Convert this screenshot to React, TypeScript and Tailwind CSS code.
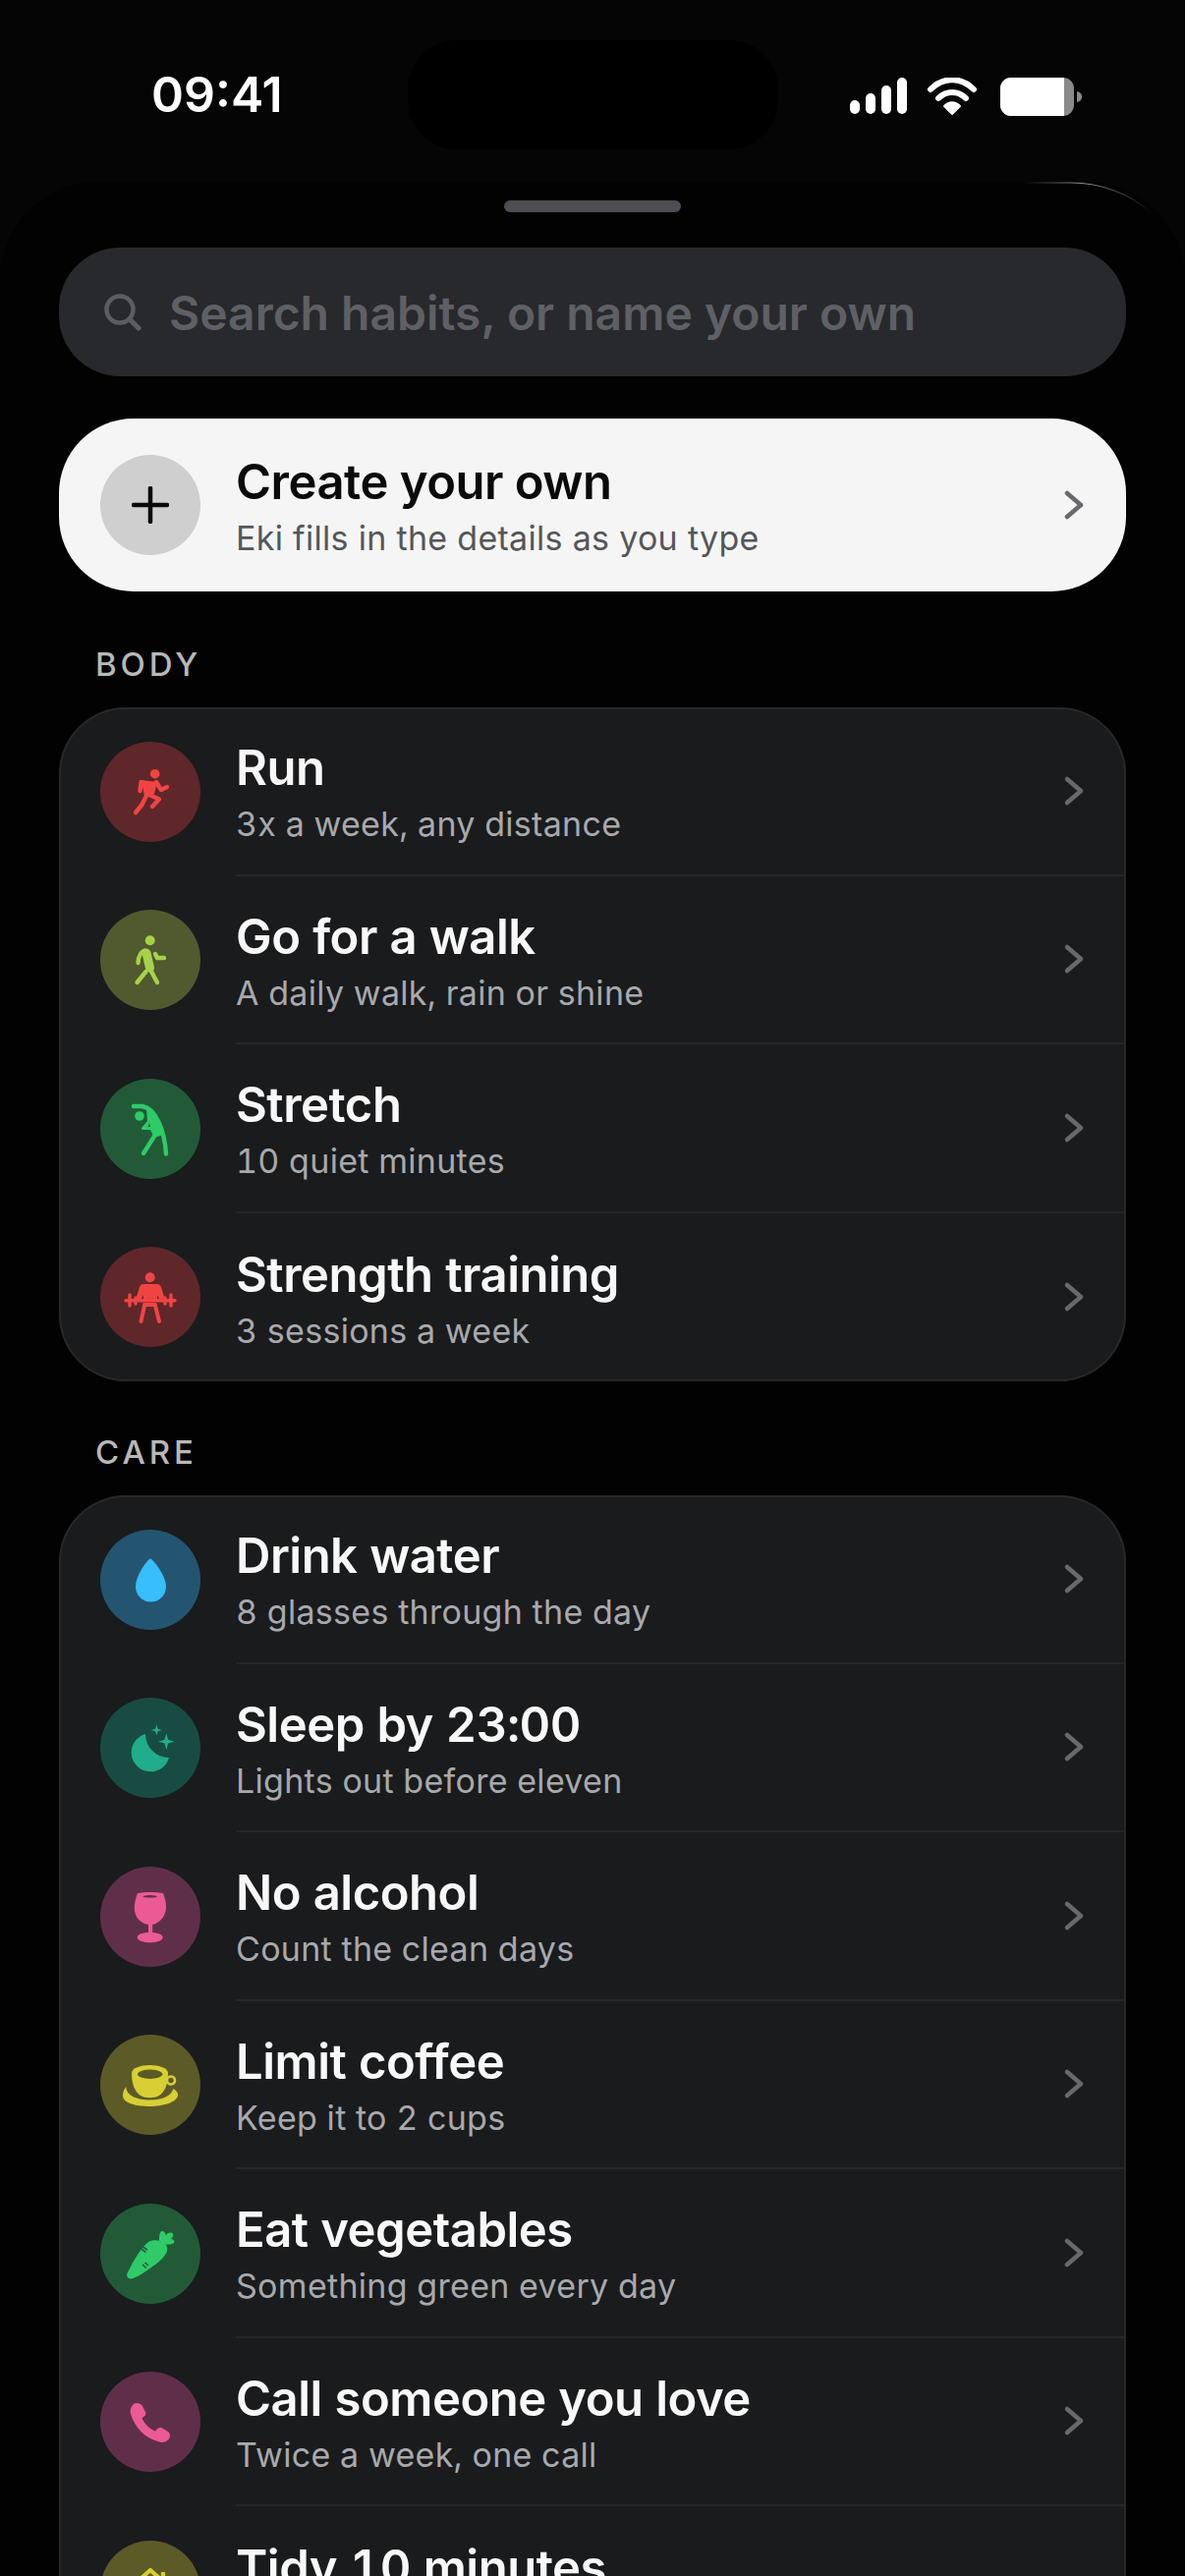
import { ReactNode } from "react";

type Habit = {
    title: string;
    subtitle: string;
    circle: string;
    color: string;
    icon: ReactNode;
};

const RunIcon = () => (
    <>
        <circle cx="55.7" cy="32.7" r="4.8" fill="currentColor" />
        <path d="M42 39 L58 41 L55 53 L45 56 Z" fill="currentColor" />
        <path
            d="M41.5 41 L40.5 50 M57 41 L62 49 L68 46 M47 55 L42.5 64 L36 72 M50 54 L60 58.5 L53 66"
            fill="none"
            stroke="currentColor"
            strokeWidth="4.4"
            strokeLinecap="round"
            strokeLinejoin="round"
        />
    </>
);

const WalkIcon = () => (
    <>
        <circle cx="50.7" cy="31.3" r="5" fill="currentColor" />
        <path
            d="M47 44 L50.5 59"
            fill="none"
            stroke="currentColor"
            strokeWidth="9"
            strokeLinecap="round"
        />
        <path
            d="M45 41.5 C41 43 39 47 38.5 54 M56 45 L58 49 L65 49 M46.5 63 L37.5 74 M50 59 L58 74"
            fill="none"
            stroke="currentColor"
            strokeWidth="4.4"
            strokeLinecap="round"
            strokeLinejoin="round"
        />
    </>
);

const StretchIcon = () => (
    <>
        <circle cx="40" cy="38" r="4.8" fill="currentColor" />
        <path
            d="M34 28 H43 C56 30 65.5 52 67 76.5 M56 57 L44 76"
            fill="none"
            stroke="currentColor"
            strokeWidth="4.4"
            strokeLinecap="round"
            strokeLinejoin="round"
        />
        <path
            fillRule="evenodd"
            d="M47 31 L60 42 L64 57 L55 60 L51 52 H43.5 C42 52 41.5 50.5 42.5 49.5 L48 43 Z M48.5 49 H51 L50 45 Z"
            fill="currentColor"
        />
    </>
);

const StrengthIcon = () => (
    <>
        <circle cx="50.7" cy="31.3" r="5" fill="currentColor" />
        <path
            d="M44 38 H58 C60 38 61 39 62 41 L66 54 L61 55 L58 49 V54 H44 V49 L41 55 L36 54 L40 41 C41 39 42 38 44 38 Z"
            fill="currentColor"
        />
        <path
            d="M26 54.7 H76 M30 49 V60 M72 49 V60 M36 52 V58 M66 52 V58"
            fill="none"
            stroke="currentColor"
            strokeWidth="3.4"
            strokeLinecap="round"
        />
        <path
            d="M45 60 L41.5 76 M56 60 L60 76 M45 59 H56"
            fill="none"
            stroke="currentColor"
            strokeWidth="4"
            strokeLinecap="round"
        />
    </>
);

const DropIcon = () => (
    <path
        d="M51 29.5 C53 29.5 67 46 67 58 A15.5 15.5 0 0 1 36 58 C36 46 49 29.5 51 29.5 Z"
        fill="currentColor"
    />
);

const MoonIcon = () => (
    <>
        <path
            d="M46 37 A19.5 19.5 0 1 0 70 61 A24 24 0 0 1 46 37 Z"
            fill="currentColor"
        />
        <path
            d="M57.3 27.5 L58.6 31.7 L62.8 33 L58.6 34.3 L57.3 38.5 L56 34.3 L51.8 33 L56 31.7 Z"
            fill="currentColor"
        />
        <path
            d="M67.3 36.5 L69.2 42.8 L75.5 44.7 L69.2 46.6 L67.3 52.9 L65.4 46.6 L59.1 44.7 L65.4 42.8 Z"
            fill="currentColor"
        />
    </>
);

const WineIcon = () => (
    <>
        <path
            d="M38 27 C44 25.5 58 25.5 64 27 C67 35 68 42 66 47 C64 54 58 58 53.2 59 V68 H49 V59 C43 58 37 54 35.5 47 C34 42 35 35 38 27 Z"
            fill="currentColor"
        />
        <ellipse cx="50.7" cy="72" rx="13" ry="5.3" fill="currentColor" />
        <ellipse cx="50.7" cy="30.3" rx="7.3" ry="1.3" fill="#5f2f49" />
    </>
);

const CoffeeIcon = () => (
    <>
        <path
            d="M26.5 53 C26 62 38 66.5 51 66.5 C62 66.5 72 63 74.5 55 C78 57 79.5 60 79 62 C78 69 63 73 51 73 C37 73 23 70 23 62 C23 58 24.5 55 26.5 53 Z"
            fill="currentColor"
        />
        <path
            d="M32 39 C32 34 41 31 50.5 31 C60 31 69 34 69 39 C69 50 66 58 60 62 C55 65 46 65 41 62 C35 58 32 50 32 39 Z"
            fill="currentColor"
        />
        <ellipse cx="50.7" cy="40.3" rx="12.7" ry="4.7" fill="#5c5a27" />
        <circle
            cx="72"
            cy="46.5"
            r="4"
            fill="none"
            stroke="currentColor"
            strokeWidth="2.6"
        />
    </>
);

const CarrotIcon = () => (
    <>
        <path
            d="M27.5 71 C33 60 41 45 49 39 C55 35 66 38 68 44 C70 50 62 58 56 62 C48 68 37 76 31 76.5 C27.5 76.5 26.5 73.5 27.5 71 Z"
            fill="currentColor"
        />
        <path
            d="M60 39 C60 33 60 28 63 28 C66 28 66 31 67 32 C69 29 73 29 74 31 C75 33 73 35 72 36 C75 36 76 39 75 40 C73 42 69 41 66 42 Z"
            fill="currentColor"
        />
        <path
            d="M42 43 L48 47 M41 45.5 L46.5 49.5 M43 62 L47 65.5 M45.5 60 L49 63"
            fill="none"
            stroke="#225a38"
            strokeWidth="1.6"
        />
    </>
);

const PhoneIcon = () => (
    <path
        d="M34 33 C36 31 41 32 43 35 L46 41 C47 43 46 45 44 46 L42.5 47.5 C45 53 50 58 56 60.5 L57.5 59 C59 57 61 56.5 63 57.5 L69 61 C71.5 62.5 71.5 67 69.5 69 C67 72 63 72.5 60 71.5 C46 68 35 57 31 43 C30 39 31 35.5 34 33 Z"
        fill="currentColor"
    />
);

const HouseIcon = () => (
    <path
        d="M32 47 L51 30 L70 47 M64 32 V40"
        fill="none"
        stroke="currentColor"
        strokeWidth="4.2"
        strokeLinejoin="round"
    />
);

const bodyHabits: Habit[] = [
    { title: "Run", subtitle: "3x a week, any distance", circle: "bg-[#5f2729]", color: "text-[#f04444]", icon: <RunIcon /> },
    { title: "Go for a walk", subtitle: "A daily walk, rain or shine", circle: "bg-[#505a2e]", color: "text-[#a6d24a]", icon: <WalkIcon /> },
    { title: "Stretch", subtitle: "10 quiet minutes", circle: "bg-[#225a38]", color: "text-[#2ecb68]", icon: <StretchIcon /> },
    { title: "Strength training", subtitle: "3 sessions a week", circle: "bg-[#5f2729]", color: "text-[#f04444]", icon: <StrengthIcon /> },
];

const careHabits: Habit[] = [
    { title: "Drink water", subtitle: "8 glasses through the day", circle: "bg-[#245570]", color: "text-[#38bdfd]", icon: <DropIcon /> },
    { title: "Sleep by 23:00", subtitle: "Lights out before eleven", circle: "bg-[#184c42]", color: "text-[#1fad8b]", icon: <MoonIcon /> },
    { title: "No alcohol", subtitle: "Count the clean days", circle: "bg-[#5f2f49]", color: "text-[#ec5a94]", icon: <WineIcon /> },
    { title: "Limit coffee", subtitle: "Keep it to 2 cups", circle: "bg-[#5c5a27]", color: "text-[#d8cf35]", icon: <CoffeeIcon /> },
    { title: "Eat vegetables", subtitle: "Something green every day", circle: "bg-[#225a38]", color: "text-[#2ecb68]", icon: <CarrotIcon /> },
    { title: "Call someone you love", subtitle: "Twice a week, one call", circle: "bg-[#5f2f49]", color: "text-[#ec5a94]", icon: <PhoneIcon /> },
    { title: "Tidy 10 minutes", subtitle: "\u00a0", circle: "bg-[#5c5a27]", color: "text-[#d8cf35]", icon: <HouseIcon /> },
];

const Chevron = () => (
    <svg viewBox="0 0 22 32" className="w-[22px] h-[32px] shrink-0 text-[#68696c] mr-[42px]">
        <path
            d="M4 4 L18 16 L4 28"
            fill="none"
            stroke="currentColor"
            strokeWidth="4.5"
            strokeLinecap="round"
            strokeLinejoin="round"
        />
    </svg>
);

const HabitRow = ({ habit, last }: { habit: Habit; last: boolean }) => (
    <div className="flex items-center h-[171.5px] pl-[42px]">
        <div className={`w-[102px] h-[102px] rounded-full shrink-0 ${habit.circle} ${habit.color}`}>
            <svg viewBox="0 0 102 102" className="w-[102px] h-[102px]">
                {habit.icon}
            </svg>
        </div>
        <div
            className={`flex items-center self-stretch flex-1 ml-[36px] ${
                last ? "" : "border-b-2 border-[#25272a]"
            }`}
        >
            <div className="flex-1 min-w-0 pt-[3px] tabular-nums">
                <p className="text-[49px] leading-[64px] font-semibold text-[#f8f8f8] tracking-[-0.5px]">
                    {habit.title}
                </p>
                <p className="mt-[2px] text-[34px] leading-[46px] text-[#a8a9ac] tracking-[0.3px]">
                    {habit.subtitle}
                </p>
            </div>
            <Chevron />
        </div>
    </div>
);

const Section = ({ label, habits }: { label: string; habits: Habit[] }) => (
    <section>
        <h2 className="text-[33px] leading-[40px] font-medium tracking-[3.9px] text-[#b8b8b8] pl-[37px]">
            {label}
        </h2>
        <div className="mt-[24px] bg-[#191b1d] shadow-[inset_0_0_0_2px_#26282a] rounded-[68px] overflow-hidden">
            {habits.map((habit, index) => (
                <HabitRow key={habit.title} habit={habit} last={index === habits.length - 1} />
            ))}
        </div>
    </section>
);

const StatusIcons = () => (
    <svg viewBox="0 0 240 44" className="w-[240px] h-[44px]">
        <rect x="0" y="23" width="10" height="14" rx="5" fill="#fff" />
        <rect x="16" y="16" width="10" height="21" rx="5" fill="#fff" />
        <rect x="32" y="8" width="10" height="29" rx="5" fill="#fff" />
        <rect x="48" y="0" width="10" height="37" rx="5" fill="#fff" />
        <path
            d="M82 12 C95 -1 113 -1 126 12 M90 21 C98 13 110 13 118 21"
            fill="none"
            stroke="#fff"
            strokeWidth="6"
            strokeLinecap="round"
        />
        <path d="M96 29 C101 24 107 24 112 29 L104 37 Z" fill="#fff" stroke="#fff" strokeWidth="2" strokeLinejoin="round" />
        <rect x="153" y="0" width="75" height="39" rx="11" fill="#8a8a8a" />
        <path d="M164 0 H218 V39 H164 A11 11 0 0 1 153 28 V11 A11 11 0 0 1 164 0 Z" fill="#fff" />
        <path d="M231 14 C235 15 236 17 236 19.5 C236 22 235 24 231 25 Z" fill="#8a8a8a" />
    </svg>
);

const App = () => {
    return (
        <div className="relative w-[1206px] h-[2622px] overflow-hidden bg-[#050505] font-['Inter',sans-serif]">
            <header className="flex items-start h-[185px]">
                <p className="w-[415px] pl-[154px] pt-[66px] text-[50px] leading-[60px] font-semibold text-white">
                    09:41
                </p>
                <div className="w-[377px] h-[111px] mt-[41px] rounded-[50px] bg-black"></div>
                <div className="pl-[73px] pt-[79px]">
                    <StatusIcons />
                </div>
            </header>

            <main className="h-[2437px] bg-[#020202] rounded-t-[100px] px-[60px] pt-[19px]">
                <div className="w-[180px] h-[12px] mx-auto rounded-full bg-[#4d4d54]"></div>

                <div className="flex items-center h-[131px] mt-[36px] rounded-[62px] bg-[#28292c] pl-[46px]">
                    <svg viewBox="0 0 38 38" className="w-[38px] h-[38px] shrink-0 text-[#5c5d62]">
                        <circle cx="16" cy="16" r="13.5" fill="none" stroke="currentColor" strokeWidth="4.5" />
                        <path d="M26 26 L35 35" stroke="currentColor" strokeWidth="5" strokeLinecap="round" />
                    </svg>
                    <p className="ml-[28px] mt-[2px] text-[48px] font-semibold text-[#5f6065]">
                        Search habits, or name your own
                    </p>
                </div>

                <div className="flex items-center h-[176px] mt-[43px] rounded-[76px] bg-[#f5f5f5] pl-[42px]">
                    <div className="flex items-center justify-center w-[102px] h-[102px] rounded-full bg-[#cfcfcf] shrink-0">
                        <svg viewBox="0 0 38 38" className="w-[38px] h-[38px] text-[#0a0a0a]">
                            <path
                                d="M19 2 V36 M2 19 H36"
                                stroke="currentColor"
                                strokeWidth="4.5"
                                strokeLinecap="round"
                            />
                        </svg>
                    </div>
                    <div className="flex-1 min-w-0 ml-[36px] pt-[1px]">
                        <p className="text-[49px] leading-[64px] font-semibold text-[#0a0a0a] tracking-[-0.5px]">
                            Create your own
                        </p>
                        <p className="mt-[2px] text-[34px] leading-[46px] text-[#55565a] tracking-[0.3px]">
                            Eki fills in the details as you type
                        </p>
                    </div>
                    <Chevron />
                </div>

                <div className="mt-[54px]">
                    <Section label="BODY" habits={bodyHabits} />
                </div>
                <div className="mt-[52px]">
                    <Section label="CARE" habits={careHabits} />
                </div>
            </main>

            {/* faint highlight on the sheet's top right corner */}
            <svg viewBox="0 0 140 40" className="absolute left-[1040px] top-[183px] w-[140px] h-[40px]">
                <defs>
                    <linearGradient id="glint" x1="0" y1="0" x2="1" y2="0">
                        <stop offset="0" stopColor="#fff" stopOpacity="0" />
                        <stop offset="0.45" stopColor="#fff" stopOpacity="0.55" />
                        <stop offset="1" stopColor="#fff" stopOpacity="0" />
                    </linearGradient>
                </defs>
                <path d="M0 3 H50 C80 3 110 14 132 34" fill="none" stroke="url(#glint)" strokeWidth="1.2" />
            </svg>
        </div>
    );
};

export default App;
